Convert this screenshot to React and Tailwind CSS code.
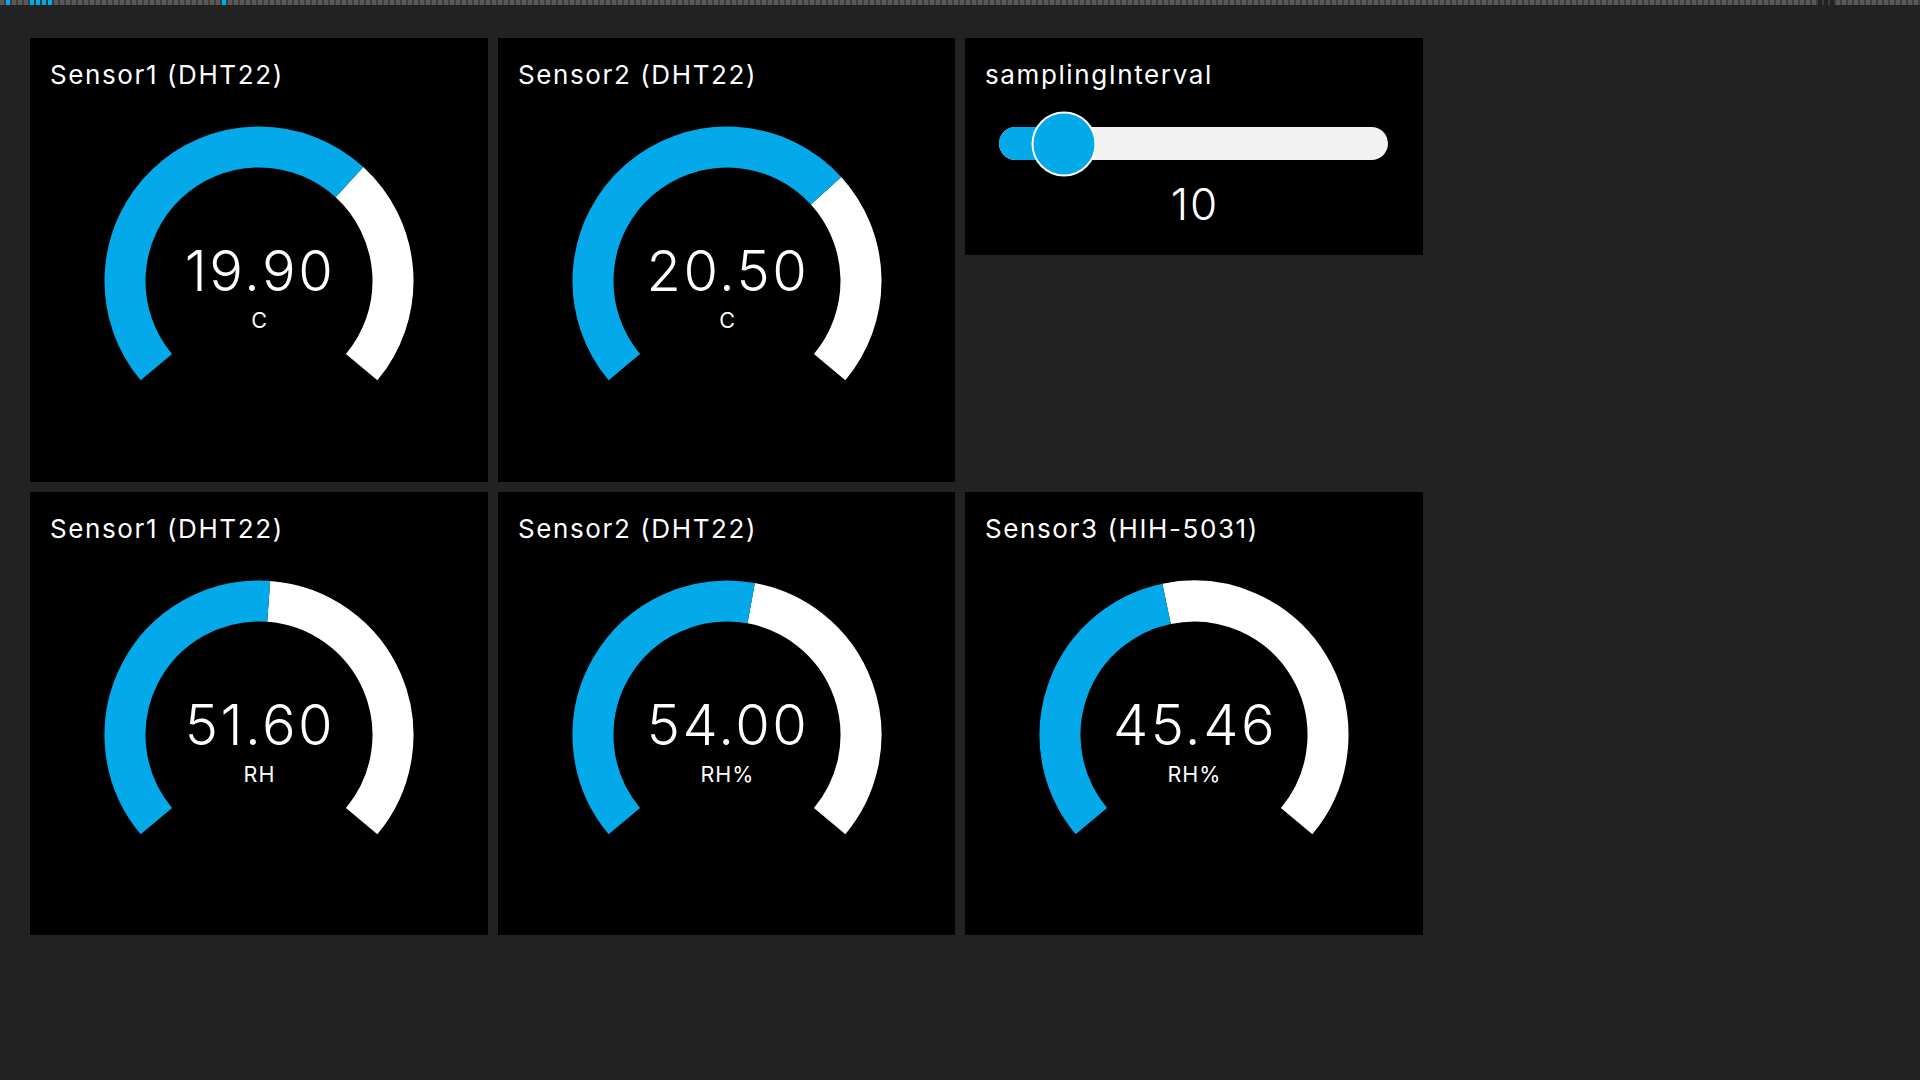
const BLUE = "#03a9e8";

const font = { fontFamily: "Inter, 'Liberation Sans', sans-serif" };

function TopStrip() {
  const blue = new Set([1, 5, 6, 7, 8, 37]);
  const squares = Array.from({ length: 320 }, (_, i) => i);
  return (
    <div className="flex h-[5px] w-full gap-[2px] bg-[#3c3c3c] overflow-hidden">
      {squares.map((i) =>
        i >= 303 && i <= 305 ? (
          <div key={i} className="h-full w-[4px] shrink-0 bg-[#222222]" />
        ) : (
          <div
            key={i}
            className={`h-full w-[4px] shrink-0 ${blue.has(i) ? "bg-[#03a9e8]" : "bg-[#595959]"}`}
          />
        )
      )}
    </div>
  );
}

function Gauge({ value, min, max, unit, digits = 2 }) {
  const cx = 160;
  const cy = 160;
  const r = 134;
  const pt = (deg) => {
    const a = (deg * Math.PI) / 180;
    return [cx + r * Math.sin(a), cy - r * Math.cos(a)];
  };
  const arc = (a0, a1) => {
    const [x0, y0] = pt(a0);
    const [x1, y1] = pt(a1);
    const large = a1 - a0 > 180 ? 1 : 0;
    return `M${x0} ${y0} A${r} ${r} 0 ${large} 1 ${x1} ${y1}`;
  };
  const v = -130 + ((value - min) / (max - min)) * 260;

  return (
    <svg width="320" height="270" viewBox="0 0 320 270" className="mt-[33.5px] block">
      <path d={arc(v, 130)} fill="none" stroke="#ffffff" strokeWidth="41" />
      <path d={arc(-130, v)} fill="none" stroke={BLUE} strokeWidth="41" />
      <text
        x={cx + 1}
        y={cy + 9.7}
        textAnchor="middle"
        fill="#ffffff"
        fontSize="56"
        fontWeight="300"
        letterSpacing="2.5"
        fontFamily="Inter, 'Liberation Sans', sans-serif"
      >
        {value.toFixed(digits)}
      </text>
      <text
        x={cx + 0.5}
        y={cy + 47.3}
        textAnchor="middle"
        fill="#ffffff"
        fontSize="21.5"
        fontWeight="400"
        letterSpacing="1"
        fontFamily="Inter, 'Liberation Sans', sans-serif"
      >
        {unit}
      </text>
    </svg>
  );
}

function GaugeCard({ title, ...rest }) {
  return (
    <div className="flex flex-col items-center bg-black">
      <div className="self-start pl-[20px] pt-[23.5px] text-[26px] leading-[26px] tracking-[1.6px] text-white">
        {title}
      </div>
      <Gauge {...rest} />
    </div>
  );
}

function SliderCard({ title, value, min, max }) {
  const pct = (value - min) / (max - min);
  const thumb = 32.5 + pct * (389 - 65);
  return (
    <div className="flex h-[217px] flex-col bg-black self-start">
      <div className="pl-[20px] pt-[23.5px] text-[26px] leading-[26px] tracking-[1.6px] text-white">
        {title}
      </div>
      <div className="relative ml-[34px] mt-[39.5px] h-[33px] w-[389px] rounded-full bg-[#f2f2f2]">
        <div className="h-full rounded-full bg-[#03a9e8]" style={{ width: `${thumb}px` }} />
        <div
          className="absolute top-1/2 h-[65px] w-[65px] -translate-x-1/2 -translate-y-1/2 rounded-full border-2 border-white bg-[#03a9e8]"
          style={{ left: `${thumb}px` }}
        />
      </div>
      <div className="mt-[22.3px] pl-[2px] text-center text-[44px] leading-[44px] font-light tracking-[2px] text-white">
        {value}
      </div>
    </div>
  );
}

export default function App() {
  return (
    <div className="min-h-[1080px] w-full bg-[#222222]" style={font}>
      <TopStrip />
      <div className="grid grid-cols-[458px_457px_458px] grid-rows-[444px_443px] gap-x-[10px] gap-y-[10px] pl-[30px] pt-[33px]">
        <GaugeCard title="Sensor1 (DHT22)" value={19.9} min={0} max={30} unit="C" />
        <GaugeCard title="Sensor2 (DHT22)" value={20.5} min={0} max={30} unit="C" />
        <SliderCard title="samplingInterval" value={10} min={0} max={100} />
        <GaugeCard title="Sensor1 (DHT22)" value={51.6} min={0} max={100} unit="RH" />
        <GaugeCard title="Sensor2 (DHT22)" value={54.0} min={0} max={100} unit="RH%" />
        <GaugeCard title="Sensor3 (HIH-5031)" value={45.46} min={0} max={100} unit="RH%" />
      </div>
    </div>
  );
}
